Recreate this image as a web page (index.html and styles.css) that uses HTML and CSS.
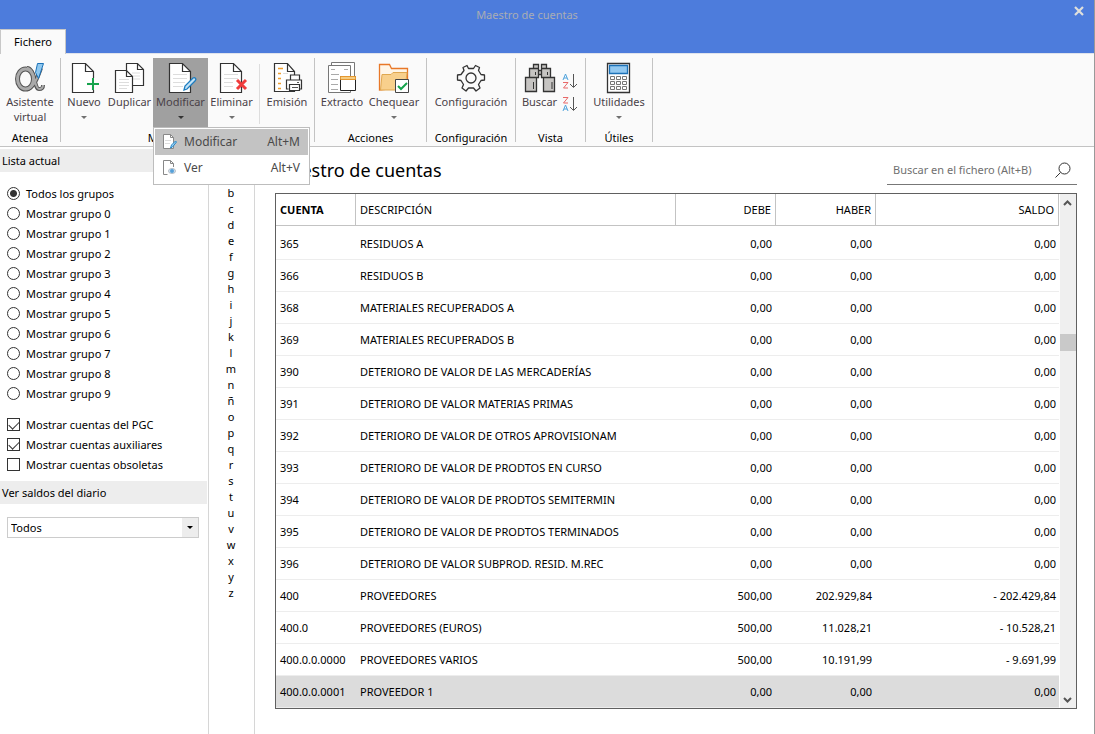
FILE: index.html
```html
<!DOCTYPE html>
<html lang="es">
<head>
<meta charset="utf-8">
<title>Maestro de cuentas</title>
<link rel="stylesheet" href="styles.css">
</head>
<body>
<div class="window">
  <header class="titlebar">
    <span class="window-title">Maestro de cuentas</span>
    <button class="close" aria-label="Cerrar"><svg width="10" height="10" viewBox="0 0 10 10"><path d="M1 1l8 8M9 1l-8 8" stroke="#e0e0dc" stroke-width="2.2"/></svg></button>
    <button class="tab">Fichero</button>
  </header>

  <nav class="ribbon">
    <section class="group g-atenea">
      <div class="tools">
        <button class="tool"><svg width="32" height="32" viewBox="0 0 32 32"><ellipse cx="11.500" cy="17" rx="8" ry="10" fill="none" stroke="#555" stroke-width="5"/><path d="M27 6C24 14 21 24 14 27M13 6C21 6 20 27 25 27 28 27 29 26 29 23" fill="none" stroke="#555" stroke-width="4"/><ellipse cx="11.500" cy="17" rx="8" ry="10" fill="none" stroke="#aaa" stroke-width="3"/><path d="M27 6C24 14 21 24 14 27M13 6C21 6 20 27 25 27 28 27 29 26 29 23" fill="none" stroke="#aaa" stroke-width="2"/><path d="M23.500 1.500h6l-5 15-3-6z" fill="#8fc8ef" stroke="#1c72b8"/></svg><span>Asistente<br>virtual</span></button>
      </div>
      <h2>Atenea</h2>
    </section>

    <section class="group g-mant">
      <div class="tools">
        <button class="tool w-nuevo"><svg width="32" height="32" viewBox="0 0 32 32"><path d="M17.500 1.500h-13v29h21V9.500zM17.500 1.500v8h8" fill="#fff" stroke="#333" stroke-width="1.200"/><path d="M25 16v12M19 22h12" stroke="#fafafa" stroke-width="4"/><path d="M25 16v12M19 22h12" stroke="#16a34c" stroke-width="2"/></svg><span>Nuevo</span><i class="caret"></i></button>
        <button class="tool w-dup"><svg width="32" height="32" viewBox="0 0 32 32"><path d="M23.500 1.500h-11v22h17v-16zM23.500 1.500v6h6" fill="#fff" stroke="#333" stroke-width="1.200"/><path d="M18 11h8M18 14h8M18 17h8" stroke="#ddd"/><path d="M12.500 8.500h-11v22h17v-16zM12.500 8.500v6h6" fill="#fff" stroke="#333" stroke-width="1.200"/><path d="M5 17.500h10M5 20.500h10M5 23.500h10M5 26.500h8" stroke="#ddd"/></svg><span>Duplicar</span></button>
        <div class="split">
          <button class="tool w-mod pressed"><svg width="32" height="32" viewBox="0 0 32 32"><path d="M17.500 1.500h-13v29h21V9.500zM17.500 1.500v8h8" fill="#fff" stroke="#333" stroke-width="1.200"/><path d="M8 12.500h14M8 16.500h14M8 20.500h12M8 24.500h10" stroke="#ddd"/><path d="M19 28l1-4 8-8c2-1 4 1 2 3l-8 8z" fill="#c2e2f6" stroke="#1c7cc0" stroke-width="1.300"/></svg><span>Modificar</span><i class="caret"></i></button>
          <div class="menu">
            <button class="item active"><svg width="16" height="16" viewBox="0 0 16 16"><path d="M8.500.500h-7v14h10V3.500zM8.500.500v3h3" fill="#fff" stroke="#888"/><path d="M3 6.500h6M3 9.500h5" stroke="#ddd"/><path d="M8.500 14l1-3 4-4 1 1-4 5z" fill="#9bd0f2" stroke="#2989c8"/></svg><span>Modificar</span><kbd>Alt+M</kbd></button>
            <button class="item"><svg width="16" height="16" viewBox="0 0 16 16"><path d="M5.500 14.500h-4V.500h7l3 3V7M8.500.500v3h3" fill="#fff" stroke="#888"/><ellipse cx="10" cy="11" rx="3.500" ry="2.500" fill="#d5e5f2" stroke="#b5bdc6"/><circle cx="10" cy="11" r="2" fill="#55a0d8"/></svg><span>Ver</span><kbd>Alt+V</kbd></button>
          </div>
        </div>
        <button class="tool w-elim"><svg width="32" height="32" viewBox="0 0 32 32"><path d="M17.500 1.500h-13v29h21V9.500zM17.500 1.500v8h8" fill="#fff" stroke="#333" stroke-width="1.200"/><path d="M8 12.500h14M8 16.500h14M8 20.500h9M8 24.500h9" stroke="#ddd"/><path d="M21 18l9 9M30 18l-9 9" stroke="#f03c3c" stroke-width="3"/></svg><span>Eliminar</span><i class="caret"></i></button>
        <i class="divider"></i>
        <button class="tool w-emi"><svg width="32" height="32" viewBox="0 0 32 32"><path d="M16.500 1.500h-13v28h20V9.500zM16.500 1.500v8h7" fill="#fff" stroke="#333" stroke-width="1.200"/><path d="M7 6.500h5M7 11.500h3M7 16.500h3M7 21.500h3M7 26.500h3" stroke="#f0a030" stroke-width="1.500"/><path d="M12 11.500h5" stroke="#ddd"/><path d="M19.500 18v-5h9v5M17.500 27h-2v-9h15v9h-2M18.500 22.500h10v6h-10z" fill="#fff" stroke="#333" stroke-width="1.200"/><path d="M21 25.500h6M26 20.500h2" stroke="#555"/></svg><span>Emisión</span></button>
      </div>
      <h2>Mantenimiento</h2>
    </section>

    <section class="group g-acc">
      <div class="tools">
        <button class="tool w-ext"><svg width="32" height="32" viewBox="0 0 32 32"><path d="M5.500.500h23v28h-23z" fill="#fff" stroke="#777"/><path d="M2.500 3.500h22v27h-22z" fill="#fff" stroke="#777"/><path d="M5 7.500h4M18 7.500h4M5 12.500h8M5 17.500h7M5 22.500h7M5 27.500h7" stroke="#aaa"/><path d="M14.500 14.500h15v14h-15z" fill="#fff" stroke="#222"/><path d="M14.500 14.500h15v3h-15z" fill="#f6cc80" stroke="#e69830"/></svg><span>Extracto</span></button>
        <button class="tool w-cheq"><svg width="32" height="32" viewBox="0 0 32 32"><path d="M1.500 28V2.500h10l2 4h16V25z" fill="#fff6e8" stroke="#e87828" stroke-width="1.300"/><path d="M2.500 28L4 12.500h9l2-2h14L27 28z" fill="#f8d08c" stroke="#e0a850"/><path d="M17.500 17.500h13v13h-13z" fill="#fff" stroke="#444"/><path d="M20 24l3 3 6-6" fill="none" stroke="#16a34c" stroke-width="2"/></svg><span>Chequear</span><i class="caret"></i></button>
      </div>
      <h2>Acciones</h2>
    </section>

    <section class="group g-conf">
      <div class="tools">
        <button class="tool"><svg width="32" height="32" viewBox="0 0 32 32"><path d="M13.500 6.500L12 3.500 8 5.500l1 3-3 4-3.500.500v5l3.500.500 2.500 4-1.500 3.500 4 3 2.500-3h5l2.500 3 4-3-1.500-3.500 2.500-4 3.500-.500v-5l-3.500-.500-2.500-4 1-3-4-2-2 3z" fill="none" stroke="#333" stroke-width="1.300" stroke-linejoin="round"/><circle cx="16" cy="16" r="5" fill="none" stroke="#333" stroke-width="1.300"/></svg><span>Configuración</span></button>
      </div>
      <h2>Configuración</h2>
    </section>

    <section class="group g-vista">
      <div class="tools">
        <button class="tool w-bus"><svg width="32" height="32" viewBox="0 0 32 32"><path d="M9.500 2.500h5v4h-5zM17.500 2.500h5v4h-5zM5.500 6.500h9v9h-9zM17.500 6.500h9v9h-9zM14.500 8.500h3v4h-3zM1.500 15.500h11v14h-11zM19.500 15.500h11v14h-11z" fill="#c6c4c2" stroke="#333" stroke-width="1.300"/><path d="M9.500 20v7M28 20v7M11.500 10v3M23.500 10v3" stroke="#333"/></svg><span>Buscar</span></button>
        <div class="sorts">
          <button aria-label="Orden ascendente"><svg width="16" height="16" viewBox="0 0 16 16"><path d="M1 7L3.500 1 6 7M2 5h3" fill="none" stroke="#4fa3dc"/><path d="M1 9.500h5L1.500 15H6" fill="none" stroke="#e86868"/><path d="M11.500 1v13M8 11l3.500 3.500L15 11" fill="none" stroke="#555"/></svg></button>
          <button aria-label="Orden descendente"><svg width="16" height="16" viewBox="0 0 16 16"><path d="M1 1.500h5L1.500 7H6" fill="none" stroke="#e86868"/><path d="M1 15l2.500-6L6 15M2 13h3" fill="none" stroke="#4fa3dc"/><path d="M11.500 1v13M8 11l3.500 3.500L15 11" fill="none" stroke="#555"/></svg></button>
        </div>
      </div>
      <h2>Vista</h2>
    </section>

    <section class="group g-util">
      <div class="tools">
        <button class="tool"><svg width="32" height="32" viewBox="0 0 32 32"><path d="M4.500 1.500h22v29h-22z" fill="#fff" stroke="#333" stroke-width="1.300"/><path d="M6.500 3.500h18v8h-18z" fill="#92c8f0" stroke="#1c72b8" stroke-width="1.300"/><path d="M7.500 14.500h4v3h-4zM13.500 14.500h4v3h-4zM19.500 14.500h4v3h-4zM7.500 19.500h4v3h-4zM13.500 19.500h4v3h-4zM19.500 19.500h4v3h-4zM7.500 24.500h4v3h-4zM13.500 24.500h4v3h-4zM19.500 24.500h4v3h-4z" fill="#fff" stroke="#777"/></svg><span>Utilidades</span><i class="caret"></i></button>
      </div>
      <h2>Útiles</h2>
    </section>
  </nav>

  <div class="workspace">
    <aside class="sidebar">
      <h3>Lista actual</h3>
      <div class="options">
        <label><input type="radio" name="grupo" checked>Todos los grupos</label>
        <label><input type="radio" name="grupo">Mostrar grupo 0</label>
        <label><input type="radio" name="grupo">Mostrar grupo 1</label>
        <label><input type="radio" name="grupo">Mostrar grupo 2</label>
        <label><input type="radio" name="grupo">Mostrar grupo 3</label>
        <label><input type="radio" name="grupo">Mostrar grupo 4</label>
        <label><input type="radio" name="grupo">Mostrar grupo 5</label>
        <label><input type="radio" name="grupo">Mostrar grupo 6</label>
        <label><input type="radio" name="grupo">Mostrar grupo 7</label>
        <label><input type="radio" name="grupo">Mostrar grupo 8</label>
        <label><input type="radio" name="grupo">Mostrar grupo 9</label>
      </div>
      <div class="options checks">
        <label><input type="checkbox" checked>Mostrar cuentas del PGC</label>
        <label><input type="checkbox" checked>Mostrar cuentas auxiliares</label>
        <label><input type="checkbox">Mostrar cuentas obsoletas</label>
      </div>
      <h3>Ver saldos del diario</h3>
      <div class="picker">
        <select aria-label="Ver saldos del diario"><option>Todos</option></select>
        <span class="picker-arrow"></span>
      </div>
    </aside>

    <nav class="letters" aria-label="Índice">
      <a href="#a">a</a><a href="#b">b</a><a href="#c">c</a><a href="#d">d</a><a href="#e">e</a><a href="#f">f</a><a href="#g">g</a><a href="#h">h</a><a href="#i">i</a><a href="#j">j</a><a href="#k">k</a><a href="#l">l</a><a href="#m">m</a><a href="#n">n</a><a href="#nn">ñ</a><a href="#o">o</a><a href="#p">p</a><a href="#q">q</a><a href="#r">r</a><a href="#s">s</a><a href="#t">t</a><a href="#u">u</a><a href="#v">v</a><a href="#w">w</a><a href="#x">x</a><a href="#y">y</a><a href="#z">z</a>
    </nav>

    <main class="main">
      <div class="heading">
        <h1>Maestro de cuentas</h1>
        <div class="search">
          <input type="text" aria-label="Buscar en el fichero" placeholder="Buscar en el fichero (Alt+B)">
          <svg width="18" height="18" viewBox="0 0 18 18"><circle cx="9.500" cy="7.500" r="5.500" fill="none" stroke="#333"/><path d="M5.500 11.500l-5 5" stroke="#333"/></svg>
        </div>
      </div>
      <div class="grid">
        <table>
          <colgroup><col class="c-cuenta"><col class="c-desc"><col class="c-num"><col class="c-num"><col></colgroup>
          <thead><tr><th class="sorted">CUENTA</th><th>DESCRIPCIÓN</th><th>DEBE</th><th>HABER</th><th>SALDO</th></tr></thead>
          <tbody>
            <tr><td>365</td><td>RESIDUOS A</td><td>0,00</td><td>0,00</td><td>0,00</td></tr>
            <tr><td>366</td><td>RESIDUOS B</td><td>0,00</td><td>0,00</td><td>0,00</td></tr>
            <tr><td>368</td><td>MATERIALES RECUPERADOS A</td><td>0,00</td><td>0,00</td><td>0,00</td></tr>
            <tr><td>369</td><td>MATERIALES RECUPERADOS B</td><td>0,00</td><td>0,00</td><td>0,00</td></tr>
            <tr><td>390</td><td>DETERIORO DE VALOR DE LAS MERCADERÍAS</td><td>0,00</td><td>0,00</td><td>0,00</td></tr>
            <tr><td>391</td><td>DETERIORO DE VALOR MATERIAS PRIMAS</td><td>0,00</td><td>0,00</td><td>0,00</td></tr>
            <tr><td>392</td><td>DETERIORO DE VALOR DE OTROS APROVISIONAM</td><td>0,00</td><td>0,00</td><td>0,00</td></tr>
            <tr><td>393</td><td>DETERIORO DE VALOR DE PRODTOS EN CURSO</td><td>0,00</td><td>0,00</td><td>0,00</td></tr>
            <tr><td>394</td><td>DETERIORO DE VALOR DE PRODTOS SEMITERMIN</td><td>0,00</td><td>0,00</td><td>0,00</td></tr>
            <tr><td>395</td><td>DETERIORO DE VALOR DE PRODTOS TERMINADOS</td><td>0,00</td><td>0,00</td><td>0,00</td></tr>
            <tr><td>396</td><td>DETERIORO DE VALOR SUBPROD. RESID. M.REC</td><td>0,00</td><td>0,00</td><td>0,00</td></tr>
            <tr><td>400</td><td>PROVEEDORES</td><td>500,00</td><td>202.929,84</td><td>- 202.429,84</td></tr>
            <tr><td>400.0</td><td>PROVEEDORES (EUROS)</td><td>500,00</td><td>11.028,21</td><td>- 10.528,21</td></tr>
            <tr><td>400.0.0.0000</td><td>PROVEEDORES VARIOS</td><td>500,00</td><td>10.191,99</td><td>- 9.691,99</td></tr>
            <tr class="selected"><td>400.0.0.0001</td><td>PROVEEDOR 1</td><td>0,00</td><td>0,00</td><td>0,00</td></tr>
          </tbody>
        </table>
        <div class="scrollbar">
          <svg width="16" height="16" viewBox="0 0 16 16"><path d="M4 11l3.500-3.500L11 11" fill="none" stroke="#555" stroke-width="2"/></svg>
          <div class="track"><i class="thumb"></i></div>
          <svg width="16" height="16" viewBox="0 0 16 16"><path d="M4 6l3.500 3.500L11 6" fill="none" stroke="#555" stroke-width="2"/></svg>
        </div>
      </div>
    </main>
  </div>
</div>
</body>
</html>
```
FILE: styles.css
```css
* { box-sizing: border-box; }
html, body { height: 100%; margin: 0; }
body { font: 11px/16px "Noto Sans", "Open Sans", sans-serif; color: #000; background: #fff; overflow: hidden; }
h1, h2, h3 { margin: 0; font-weight: 400; }
button, input, select { font: inherit; color: inherit; margin: 0; padding: 0; border: 0; background: none; }
i { font-style: normal; }
svg { display: block; flex: none; }

.window { min-height: 100%; display: flex; flex-direction: column; border-right: 1px solid #999; }

.titlebar { background: #4d7cdc; display: grid; grid-template-columns: 1fr auto 1fr; grid-template-rows: 29px 24px; color: #a9adb4; }
.window-title { grid-column: 2; align-self: center; padding-right: 40px; }
.close { justify-self: end; width: 30px; height: 22px; display: grid; place-items: center; }
.tab { grid-row: 2; grid-column: 1; justify-self: start; width: 66px; margin-bottom: -1px; background: #fafafa; color: #000; border: 1px solid #c8c8c8; border-bottom: 0; z-index: 1; }

.ribbon { display: flex; background: #fafafa; border-bottom: 1px solid #c3c3c3; border-top: 1px solid #dfe3ec; height: 94px; padding: 4px 0; }
.group { display: flex; flex-direction: column; justify-content: space-between; border-right: 1px solid #c3c3c3; }
.group h2 { text-align: center; font-size: 11px; line-height: 16px; margin-bottom: -4px; }
.tools { display: flex; }
.tool { display: flex; flex-direction: column; align-items: center; width: 100%; height: 69px; padding-top: 4px; color: #4a4248; line-height: 15px; white-space: nowrap; }
.caret { border: 3px solid transparent; border-top-color: #707070; border-bottom: 0; margin-top: 7px; }
.pressed { background: #a0a0a0; }
.pressed .caret { border-top-color: #333; }
.divider { width: 1px; height: 60px; margin: 6px 4px 0; background: #ddd; }
.g-atenea { width: 61px; }
.g-mant { width: 254px; }
.g-mant .tools { padding-left: 1px; }
.g-acc { width: 112px; }
.g-acc .tools { padding-left: 2px; }
.g-conf { width: 89px; }
.g-vista { width: 70px; }
.g-vista .tools { padding-left: 1px; }
.g-util { width: 67px; }
.w-nuevo { width: 44px; }
.w-dup { width: 47px; }
.w-mod { width: 55px; }
.w-elim { width: 47px; }
.w-emi { width: 46px; }
.w-ext { width: 50px; }
.w-cheq { width: 54px; }
.w-bus { width: 45px; }
.sorts { display: flex; flex-direction: column; gap: 7px; padding: 15px 0 0; }
.split { position: relative; }
.menu { position: absolute; z-index: 5; top: 69px; left: 0; width: 157px; padding: 1px 1px 3px; background: #fff; border: 1px solid #bdbdbd; }
.item { display: grid; grid-template-columns: 16px 1fr auto; gap: 6px; align-items: center; width: 100%; height: 26px; padding: 0 8px 0 7px; text-align: left; font-size: 12px; color: #4a4a4a; }
.item kbd { font: inherit; }
.active { background: #c3c3c3; }

.workspace { flex: 1; display: grid; grid-template-columns: 208px 47px 1fr; }
.sidebar { padding-top: 2px; }
.sidebar h3 { background: #ededed; font-size: 11px; line-height: 23px; padding-left: 2px; margin-right: 1px; }
.options { display: flex; flex-direction: column; padding: 12px 0 0 7px; }
.options label { display: flex; align-items: center; gap: 6px; height: 20px; }
.options input { appearance: none; width: 13px; height: 13px; margin-bottom: 2px; border: 1px solid #333; background: #fff; }
.options input[type="radio"] { border-radius: 50%; }
.options input[type="radio"]:checked { background: radial-gradient(circle, #333 0 3px, #fff 4px); }
.options input[type="checkbox"]:checked::before { content: ""; display: block; width: 9px; height: 5px; margin: 2px 1px; border: solid #333; border-width: 0 0 1px 1px; transform: rotate(-45deg); }
.checks { padding-top: 11px; padding-bottom: 6px; }
.picker { position: relative; margin: 13px 9px 0 7px; }
.picker select { display: block; appearance: none; width: 100%; height: 21px; border: 1px solid #ccc; background: #fff; padding-left: 3px; }
.picker-arrow { position: absolute; top: 1px; right: 1px; bottom: 1px; width: 16px; background: #ededed; display: grid; place-items: center; pointer-events: none; }
.picker-arrow::after { content: ""; border: 3px solid transparent; border-top-color: #000; border-bottom: 0; }

.letters { display: flex; flex-direction: column; align-items: center; padding: 22px 1px 0 0; border: solid #d6d6d6; border-width: 0 1px; }
.letters a { color: inherit; text-decoration: none; }

.main { padding: 8px 17px 24px 20px; }
.heading { display: flex; justify-content: space-between; height: 38px; }
.heading h1 { font-size: 18px; line-height: 30px; }
.search { display: flex; align-items: center; width: 190px; height: 30px; padding: 0 4px 0 6px; border-bottom: 1px solid #777; }
.search input { flex: 1; min-width: 0; outline: 0; }
.search input::placeholder { color: #707070; opacity: 1; }
.grid { display: flex; border: 1px solid #606060; }
table { flex: 1; table-layout: fixed; border-collapse: separate; border-spacing: 0; margin-right: 1px; }
.c-cuenta { width: 80px; }
.c-desc { width: 320px; }
.c-num { width: 100px; }
th { height: 32px; padding: 0 4px; font-weight: 400; text-align: left; border-right: 1px solid #c3c3c3; border-bottom: 1px solid #c3c3c3; }
th.sorted { font-weight: 700; }
td { height: 32px; padding: 0 4px; border-bottom: 1px solid #ededed; white-space: nowrap; }
td:last-child { padding-right: 3px; }
tbody tr:first-child td { height: 34px; padding-top: 2px; }
th:nth-child(n+3), td:nth-child(n+3) { text-align: right; }
.selected { background: #dcdcdc; }
.scrollbar { display: flex; flex-direction: column; width: 16px; background: #efefef; }
.track { flex: 1; padding-top: 124px; }
.thumb { display: block; height: 17px; background: #c9c9c9; }
```
